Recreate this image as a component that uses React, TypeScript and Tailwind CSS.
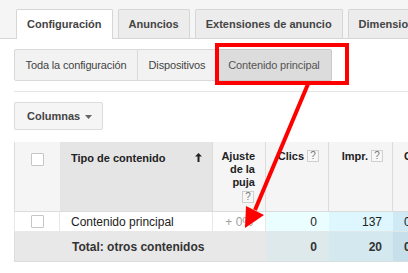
import React from "react";

const Help = () => (
  <span className="inline-flex w-[12px] h-[12px] items-center justify-center border border-[#cfcfcf] bg-[#f7f7f7] text-[10px] leading-none text-[#777] font-normal ml-[3px]">?</span>
);

const Checkbox = () => (
  <span className="block w-[13px] h-[13px] border border-[#c6c6c6] bg-white rounded-[1px]" />
);

export default function App() {
  return (
    <div className="relative w-[408px] h-[273px] overflow-hidden bg-white font-['Liberation_Sans',Arial,sans-serif] text-[#333]">
      {/* Tab bar */}
      <div className="h-[39px] bg-[#f5f5f5] border-b border-[#d6d6d6] flex items-end pl-[16px] gap-[5px]">
        <div className="h-[30px] -mb-px px-[10px] flex items-center bg-white border-x border-t border-[#d6d6d6] rounded-t-[2px] text-[11px] font-bold text-[#444] whitespace-nowrap">Configuración</div>
        <div className="h-[29px] px-[10px] flex items-center bg-[#ececec] border-x border-t border-[#d6d6d6] rounded-t-[2px] text-[11px] font-bold text-[#444] whitespace-nowrap">Anuncios</div>
        <div className="h-[29px] px-[10px] flex items-center bg-[#ececec] border-x border-t border-[#d6d6d6] rounded-t-[2px] text-[11px] font-bold text-[#444] whitespace-nowrap">Extensiones de anuncio</div>
        <div className="h-[29px] px-[10px] flex items-center bg-[#ececec] border-x border-t border-[#d6d6d6] rounded-t-[2px] text-[11px] font-bold text-[#444] whitespace-nowrap">Dimensiones</div>
      </div>

      {/* Sub tabs */}
      <div className="mt-[10px] ml-[14px] flex">
        <div className="w-[124px] h-[32px] flex items-center justify-center bg-[#f2f2f2] border border-[#d9d9d9] rounded-l-[2px] text-[11px] text-[#444] whitespace-nowrap tracking-[-0.15px]">Toda la configuración</div>
        <div className="w-[79px] h-[32px] flex items-center justify-center bg-[#f2f2f2] border-y border-r border-[#d9d9d9] text-[11px] text-[#444] whitespace-nowrap tracking-[-0.15px]">Dispositivos</div>
        <div className="w-[115px] h-[32px] flex items-center justify-center bg-[#dcdcdc] border-y border-r border-[#cacaca] rounded-r-[2px] text-[11px] text-[#555] whitespace-nowrap tracking-[-0.15px]">Contenido principal</div>
      </div>

      {/* Separator */}
      <div className="mt-[10px] ml-[14px] h-px bg-[#e5e5e5]" />

      {/* Columnas button */}
      <div className="mt-[10px] ml-[14px] w-[89px] h-[28px] flex items-center pl-[12px] gap-[5px] bg-[#f5f5f5] border border-[#dcdcdc] rounded-[2px] text-[11px] font-bold text-[#444]">
        <span>Columnas</span>
        <svg width="7" height="4" viewBox="0 0 7 4" className="mt-[1px]"><path d="M0 0 L7 0 L3.5 4 Z" fill="#666" /></svg>
      </div>

      {/* Table */}
      <div className="mt-[12px] ml-[14px] grid grid-cols-[46px_152px_54px_63px_64px_60px] grid-rows-[70px_20px_30px] text-[12px]">
        {/* Header */}
        <div className="bg-[#f5f5f5] border-l border-b border-[#dcdcdc] flex justify-center pt-[11px]"><Checkbox /></div>
        <div className="bg-[#e5e5e5] border-b border-[#dcdcdc] flex items-start justify-between pl-[11px] pr-[10px] pt-[8px] text-[11px] font-bold text-[#222]">
          <span>Tipo de contenido</span>
          <svg width="7" height="9" viewBox="0 0 7 9" className="mt-[3px]"><path d="M3.5 0 L7 3.5 L4.5 3.5 L4.5 9 L2.5 9 L2.5 3.5 L0 3.5 Z" fill="#222" /></svg>
        </div>
        <div className="bg-[#f5f5f5] border-x border-b border-[#dcdcdc] flex flex-col items-end pr-[10px] pt-[8px] text-[11px] font-bold text-[#222] leading-[13px] text-right">
          <span>Ajuste</span>
          <span>de la</span>
          <span>puja</span>
          <span className="mt-[1px] mr-[1px]"><Help /></span>
        </div>
        <div className="bg-[#f5f5f5] border-r border-b border-[#dcdcdc] flex items-start justify-end pr-[9px] pt-[8px] text-[11px] font-bold text-[#222] leading-[13px]">
          <span>Clics</span><Help />
        </div>
        <div className="bg-[#f5f5f5] border-r border-b border-[#dcdcdc] flex items-start justify-end pr-[9px] pt-[8px] text-[11px] font-bold text-[#222] leading-[13px]">
          <span>Impr.</span><Help />
        </div>
        <div className="bg-[#f5f5f5] border-b border-[#dcdcdc] flex items-start pl-[11px] pt-[8px] text-[11px] font-bold text-[#222] leading-[13px] whitespace-nowrap">
          <span>CTR</span><Help />
        </div>

        {/* Data row */}
        <div className="bg-white border-l border-b border-r border-[#e8e8e8] flex items-center justify-center"><Checkbox /></div>
        <div className="bg-white border-b border-[#e8e8e8] flex items-center pl-[11px] text-[#222]">Contenido principal</div>
        <div className="bg-white border-x border-b border-[#e8e8e8] flex items-center justify-end pr-[12px] text-[#a0a0a0]">+ 0%</div>
        <div className="bg-[#ebfeff] border-b border-[#e0e8ea] flex items-center justify-end pr-[12px] text-[#222]">0</div>
        <div className="bg-[#def6fd] border-b border-[#e0e8ea] flex items-center justify-end pr-[11px] text-[#222]">137</div>
        <div className="bg-[#cfeaf5] border-b border-[#e0e8ea] flex items-center pl-[11px] text-[#222]">0</div>

        {/* Total row */}
        <div className="col-span-3 bg-[#e8e8e8] border-l border-b border-[#dcdcdc] flex items-center pl-[57px] font-bold text-[#333] whitespace-nowrap">Total: otros contenidos</div>
        <div className="bg-[#dde9eb] border-b border-[#d6dfe2] flex items-center justify-end pr-[12px] font-bold text-[#333]">0</div>
        <div className="bg-[#d4e8ef] border-b border-[#d6dfe2] flex items-center justify-end pr-[11px] font-bold text-[#333]">20</div>
        <div className="bg-[#c6dfea] border-b border-[#d6dfe2] flex items-center pl-[11px] font-bold text-[#333]">0</div>
      </div>

      {/* Red annotation overlay */}
      <svg className="absolute inset-0 pointer-events-none" width="408" height="273" viewBox="0 0 408 273">
        <rect x="217" y="45" width="130" height="38" fill="none" stroke="#ff0000" strokeWidth="4" />
        <line x1="308" y1="84" x2="255" y2="210" stroke="#ff0000" strokeWidth="4" />
        <polygon points="245,228 246,206 264,215" fill="#ff0000" />
      </svg>
    </div>
  );
}
